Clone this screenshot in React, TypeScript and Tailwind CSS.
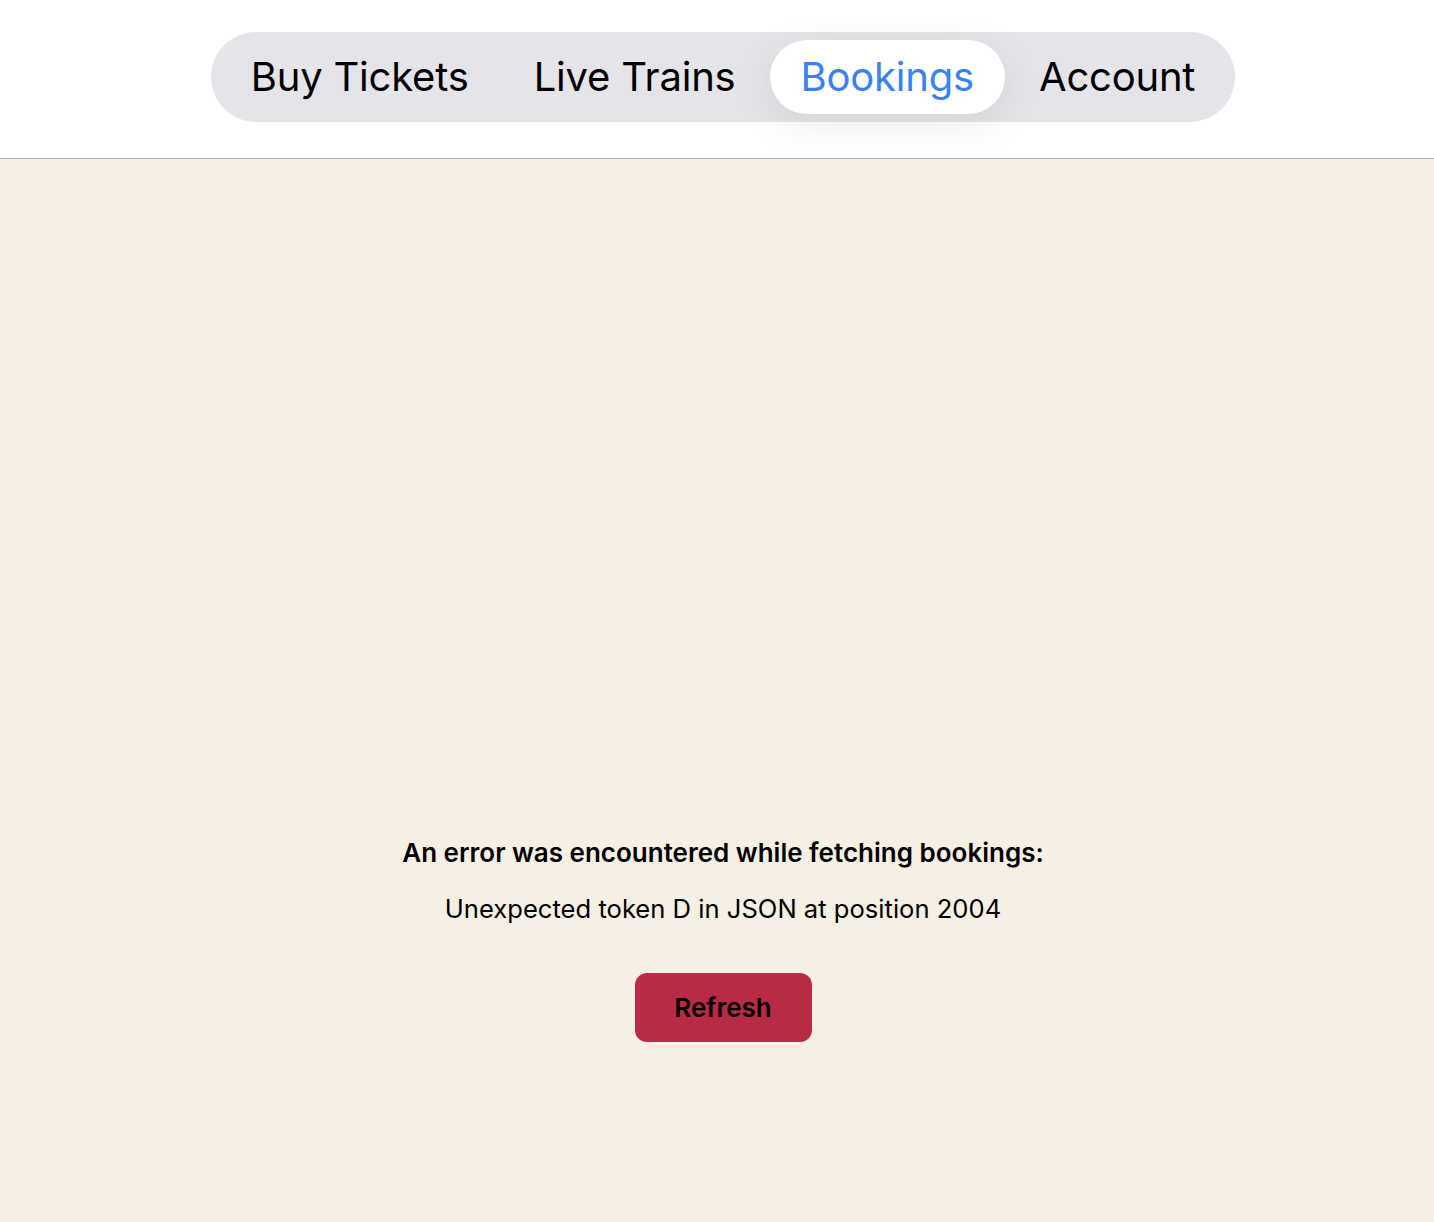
import React from "react"

const tabs = ["Buy Tickets", "Live Trains", "Bookings", "Account"]

export default function App() {
  const active = "Bookings"
  return (
    <div className="min-h-screen flex flex-col bg-[#f5efe4] font-['Inter',sans-serif] text-black">
      <header className="h-[159px] bg-white border-b border-[#b4b4b4] flex justify-center pt-[32px]">
        <nav className="ml-[12px] h-[90px] flex items-center gap-[3px] rounded-full bg-[#e4e4e9] px-[9px]">
          {tabs.map((t) => (
            <button
              key={t}
              className={
                t === active
                  ? "h-[74px] px-[31px] rounded-full bg-white text-[#3b82f0] text-[40px] tracking-[-0.2px] shadow-[0_10px_40px_rgba(0,0,0,0.08)]"
                  : "h-[74px] px-[31px] rounded-full text-[40px] tracking-[-0.2px]"
              }
            >
              {t}
            </button>
          ))}
        </nav>
      </header>
      <main className="flex-1 flex flex-col items-center pt-[677px] pl-[12px]">
        <p className="text-[26px] font-semibold leading-[34px]">
          An error was encountered while fetching bookings:
        </p>
        <p className="mt-[22px] text-[25.6px] leading-[34px]">
          Unexpected token D in JSON at position 2004
        </p>
        <button className="mt-[47px] w-[177px] h-[69px] rounded-[12px] bg-[#b92a46] text-[26px] font-semibold">
          Refresh
        </button>
      </main>
    </div>
  )
}
